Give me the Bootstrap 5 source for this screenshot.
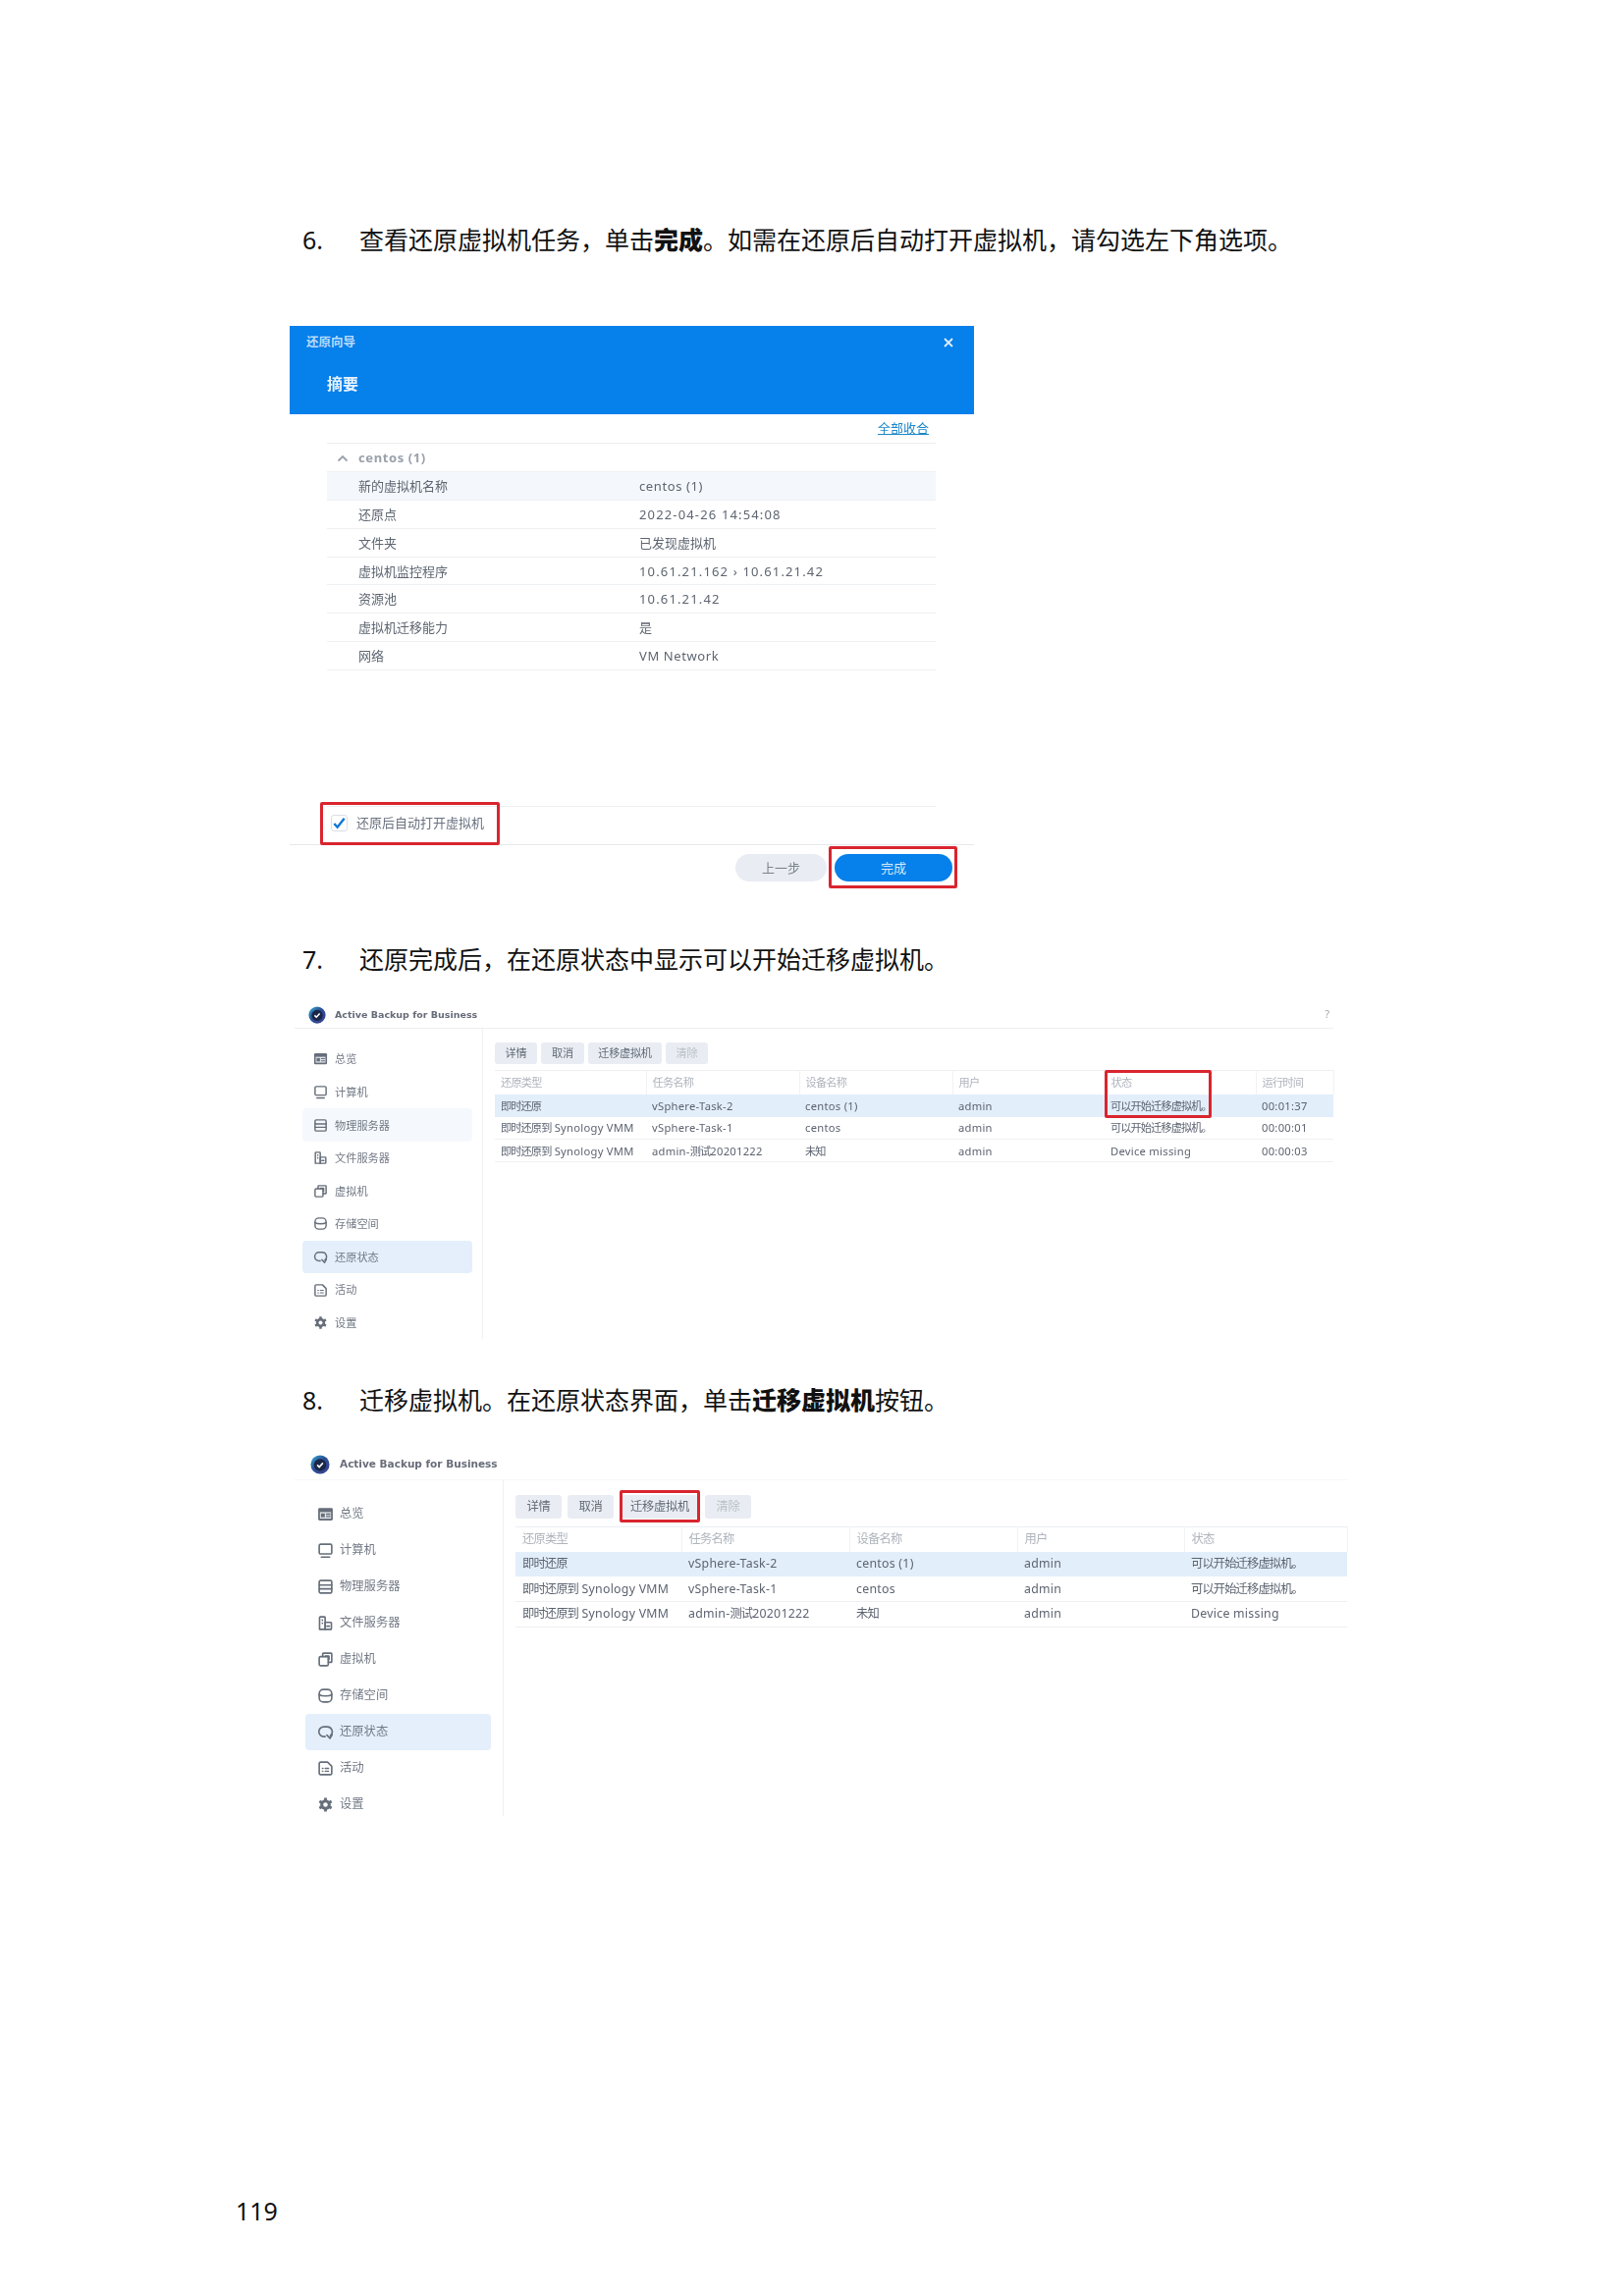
<!DOCTYPE html>
<html lang="zh-CN">
<head>
<meta charset="utf-8">
<title>119</title>
<link href="https://cdn.jsdelivr.net/npm/bootstrap@5.3.0/dist/css/bootstrap.min.css" rel="stylesheet">
<style>
html,body{background:#fff}
body{font-family:"Noto Sans","Noto Sans CJK SC",sans-serif;color:#111}
.doc-page{height:2339px;width:1654px;overflow:hidden}
.step{margin-left:308px;font-size:25px;line-height:34px;color:#111;font-family:"Noto Sans","Noto Sans CJK SC",sans-serif}
.step-no{width:58px;flex:none}
.step b{font-weight:900}
.step-6{margin-top:227px}
.step-7{margin-top:55px}
.step-8{margin-top:45px}
.page-no{margin-left:240px;margin-top:auto;padding-bottom:70px;font-size:25px;line-height:34px;color:#111}
.shot{filter:blur(.4px)}
.redbox{position:absolute;border:3.5px solid #d9252f;border-radius:2px;pointer-events:none}

/* wizard */
.wiz{margin-top:71px;margin-left:295px;width:697px}
.wiz-head{height:90px;background:#0680ea;padding:8px 21px 0 17px}
.wiz-title{font-size:12.5px;line-height:18px;font-weight:700;color:#b9dbfa}
.wiz-close{width:10px;height:10px;stroke:#dcedfd;stroke-width:1.8}
.wiz-sub{margin:23px 0 0 21px;font-size:16px;line-height:20px;font-weight:700;color:#e8f3fe}
.wiz-body{padding:0 39px 0 38px}
.wiz-link{height:29px;line-height:29px;padding-right:7px;font-size:13px;color:#1c87c9;text-decoration:underline}
.sum-tbl.table{--bs-table-bg:transparent;table-layout:fixed;margin:0;font-size:13px;color:#5d6570;border-top:1px solid #eceef1}
.sum-tbl.table>:not(caption)>*>*{padding:0 0 0 32px;height:28.9px;line-height:18px;border-bottom:1px solid #eef0f3;vertical-align:middle;color:#5d6570;box-shadow:none}
.sum-tbl.table>tbody>tr>td.val{padding-left:0;letter-spacing:.6px}
.sum-tbl.table>tbody>tr>td.val.num{letter-spacing:1.15px}
.sum-tbl.table>tbody>tr>td.val.cjk{letter-spacing:0}
.sum-tbl.table>tbody>tr>th{font-weight:700;color:#9aa1ab;position:relative;letter-spacing:.6px}
.sum-tbl.table>tbody>tr.sel>td{--bs-table-bg:#f4f8fc}
.c-label{width:318px}
.chev{position:absolute;left:10px;top:11px;width:12px;height:8px;fill:none;stroke:#9aa1ab;stroke-width:1.8}
.wiz-gap{height:138px}
.wiz-check{position:relative;height:39px;border-top:1px solid #eceef1;padding:0 0 5px 4px;font-size:13px;color:#6a7280;gap:9px}
.chk-box{width:17px;height:17px;border:1px solid #d9dfe6;border-radius:3px;flex:none}
.chk-box svg{width:15px;height:15px;fill:none;stroke:#0f77d6;stroke-width:2.6;display:block}
.rb-check{left:-7px;top:-5px;width:183px;height:44px}
.wiz-foot{height:45px;border-top:1px solid #e6e8eb;padding:9px 22px 0 0;gap:8px}
.pill-btn.btn{height:28px;padding:0;border:0;border-radius:14px;font-size:13px;line-height:28px}
.pill-sec.btn{width:93px;background:#e9edf3;color:#7b838e}
.pill-pri.btn{width:120px;background:#0680ea;color:#d5e9fc}
.rb-finish{left:-6px;top:-8px;width:131px;height:43px}

/* app */
.abb{margin-left:300px;color:#5c6370}
.abb-head{border-bottom:1px solid #eceef1}
.abb-title{font-family:"DejaVu Sans",sans-serif;font-weight:700;color:#666c78}
.abb-help{color:#a2a8b0}
.abb-side{flex:none;border-right:1px solid #eef0f3}
.abb-item{border-radius:4px;color:#727985;line-height:1}
.abb-item svg{flex:none;fill:none;stroke:#666e7a;stroke-width:2.3;stroke-linejoin:round;stroke-linecap:round}
.abb-item.on{background:#e4effb}
.abb-item.soft{background:#f5f9fd}
.tool.btn{padding:0;border:0;border-radius:3px;background:#e9edf3;color:#626a76;font-size:inherit;letter-spacing:-.3px}
.tool.btn.off{color:#bac0c8;opacity:1}
.task-tbl.table{--bs-table-bg:transparent;table-layout:fixed;margin:0;color:#5c6370;border-top:1px solid #eceef1}
.task-tbl.table>:not(caption)>*>*{border-bottom:1px solid #eef0f3;vertical-align:middle;color:#5c6370;box-shadow:none;line-height:1}
.task-tbl.table>thead>tr>th{font-weight:400;color:#aeb4bc;border-bottom:0;border-right:1px solid #f0f2f4;letter-spacing:-.8px}
.task-tbl.table>tbody>tr.sel>td{--bs-table-bg:#e3eefb;border-bottom:0}
.latin{letter-spacing:.28px}
.zh{letter-spacing:-.9px}

.abb-a{font-size:11.2px;width:1058px}
.abb-a .abb-head{height:30px;padding:2px 4px 0 14px;gap:9px}
.abb-a .abb-title{font-size:9.5px}
.abb-a .abb-side{width:192px;height:316px;padding:14px 10px 0 8px}
.abb-a .abb-item{height:33.6px;padding-left:11px;gap:7px}
.abb-a .abb-item svg{width:15px;height:15px}
.abb-a .abb-main{padding:14px 0 0 12px;width:866px}
.abb-a .tools{gap:4px;margin-bottom:6px}
.abb-a .tool{height:22px}
.w43{width:43px}.w44{width:44px}.w75{width:75px}
.abb-a .task-tbl.table>:not(caption)>*>*{padding:0 0 0 6px;height:23px}
.abb-a .task-tbl.table>thead>tr>th{height:24px}
.a1{width:154px}.a2{width:156px}.a3{width:156px}.a4{width:155px}.a5{width:154px}.a6{width:79px}
.tbl-wrap{position:relative}
.rb-status{left:621px;top:0;width:109px;height:49px}

.abb-b{font-size:12.3px;margin-top:27px;width:1072px}
.abb-b .abb-head{height:38px;padding:6px 0 0 16px;gap:10px;border-bottom-color:#f5f6f8}
.abb-b .abb-title{font-size:10.5px}
.abb-b .abb-side{width:213px;height:342px;padding:15.5px 12px 0 11px}
.abb-b .abb-item{height:37px;padding-left:11.500px;gap:6.500px}
.abb-b .abb-item svg{width:17px;height:17px}
.abb-b .abb-main{padding:15px 0 0 12px;width:859px}
.abb-b .tools{gap:6px;margin-bottom:8px}
.abb-b .tool{height:24px}
.w47{width:47px}.w76{width:76px}
.mx-mark{margin:0 2px 0 3px;position:relative}
.rb-move{left:-3px;top:-5px;width:82px;height:33px}
.abb-b .task-tbl.table>:not(caption)>*>*{padding:0 0 0 7px;height:25.6px}
.abb-b .task-tbl.table>thead>tr>th{height:25px}
.b1{width:169px}.b2{width:171px}.b3{width:171px}.b4{width:170px}.b5{width:166px}
</style>
</head>
<body>
<svg class="d-none" xmlns="http://www.w3.org/2000/svg">
<symbol id="i-home" viewBox="0 0 24 24"><rect x="1.500" y="3" width="21" height="18" rx="2" fill="#666e7a" stroke="none"/><rect x="4" y="9" width="16" height="9.500" fill="#dfe2e6" stroke="none"/><rect x="5.500" y="11" width="5.500" height="5.500" fill="#666e7a" stroke="none"/><path d="M13.500 12h5M13.500 15.500h5" stroke-width="1.800"/></symbol>
<symbol id="i-pc" viewBox="0 0 24 24"><rect x="3" y="3" width="18" height="14" rx="2"/><path d="M6 21.500h12"/></symbol>
<symbol id="i-srv" viewBox="0 0 24 24"><rect x="3" y="3" width="18" height="18" rx="2"/><path d="M3 9.500h18M3 15h18"/></symbol>
<symbol id="i-file" viewBox="0 0 24 24"><path d="M3.500 21V4a1 1 0 0 1 1-1h6a1 1 0 0 1 1 1v17z"/><path d="M11.500 11h8a1 1 0 0 1 1 1v8a1 1 0 0 1-1 1h-8z"/><path d="M7.500 7.500v.5M7.500 12v.5M14 16.500h3.500"/></symbol>
<symbol id="i-vm" viewBox="0 0 24 24"><rect x="3" y="8" width="13" height="13" rx="2"/><path d="M8 8V4a1 1 0 0 1 1-1h11a1 1 0 0 1 1 1v11a1 1 0 0 1-1 1h-4"/><path d="M12 8V7h5v5h-1"/></symbol>
<symbol id="i-db" viewBox="0 0 24 24"><rect x="3" y="3" width="18" height="18" rx="6"/><path d="M3 10.500c4 2.500 14 2.500 18 0"/></symbol>
<symbol id="i-loop" viewBox="0 0 24 24"><path d="M11.500 18.500H9.500a7 7 0 0 1 0-14h5a7 7 0 0 1 4.500 12.500"/><path d="M14 16.500l4.500 4.500 3-5"/></symbol>
<symbol id="i-log" viewBox="0 0 24 24"><path d="M5 3h10l6 6v10a2 2 0 0 1-2 2H5a2 2 0 0 1-2-2V5a2 2 0 0 1 2-2z"/><path d="M7.500 12h1M7.500 16h1M11.500 12h5M11.500 16h5" stroke-width="1.800"/></symbol>
<symbol id="i-gear" viewBox="0 0 24 24"><path d="M12 2v20M3.300 7l17.400 10M3.300 17L20.700 7" stroke-width="4" stroke-linecap="butt"/><circle cx="12" cy="12" r="7.500" fill="#666e7a" stroke="none"/><circle cx="12" cy="12" r="3.200" fill="#fff" stroke="none"/></symbol>
</svg>

<main class="doc-page d-flex flex-column">

<p class="step step-6 d-flex mb-0"><span class="step-no">6.</span><span>查看还原虚拟机任务，单击<b>完成</b>。如需在还原后自动打开虚拟机，请勾选左下角选项。</span></p>

<section class="wiz shot">
  <div class="wiz-head">
    <div class="d-flex justify-content-between align-items-center">
      <span class="wiz-title">还原向导</span>
      <svg class="wiz-close" viewBox="0 0 10 10"><path d="M1 1l8 8M9 1l-8 8"/></svg>
    </div>
    <div class="wiz-sub">摘要</div>
  </div>
  <div class="wiz-body">
    <div class="wiz-link text-end">全部收合</div>
    <table class="table sum-tbl">
      <colgroup><col class="c-label"><col></colgroup>
      <tbody>
        <tr><th colspan="2"><svg class="chev" viewBox="0 0 12 8"><path d="M1.500 6.500L6 2l4.500 4.500"/></svg>centos (1)</th></tr>
        <tr class="sel"><td>新的虚拟机名称</td><td class="val">centos (1)</td></tr>
        <tr><td>还原点</td><td class="val num">2022-04-26 14:54:08</td></tr>
        <tr><td>文件夹</td><td class="val cjk">已发现虚拟机</td></tr>
        <tr><td>虚拟机监控程序</td><td class="val num">10.61.21.162 › 10.61.21.42</td></tr>
        <tr><td>资源池</td><td class="val num">10.61.21.42</td></tr>
        <tr><td>虚拟机迁移能力</td><td class="val cjk">是</td></tr>
        <tr><td>网络</td><td class="val">VM Network</td></tr>
      </tbody>
    </table>
    <div class="wiz-gap"></div>
    <div class="wiz-check d-flex align-items-center">
      <span class="chk-box"><svg viewBox="0 0 16 16"><path d="M2.500 8.500l3.500 4L13.500 3"/></svg></span>
      <span>还原后自动打开虚拟机</span>
      <span class="redbox rb-check"></span>
    </div>
  </div>
  <div class="wiz-foot d-flex justify-content-end">
    <button type="button" class="btn pill-btn pill-sec">上一步</button>
    <span class="position-relative d-block">
      <button type="button" class="btn pill-btn pill-pri d-block">完成</button>
      <span class="redbox rb-finish"></span>
    </span>
  </div>
</section>

<p class="step step-7 d-flex mb-0"><span class="step-no">7.</span><span>还原完成后，在还原状态中显示可以开始迁移虚拟机。</span></p>

<section class="abb abb-a shot mt-4">
  <header class="abb-head d-flex align-items-center">
    <svg width="18" height="18" viewBox="0 0 24 24"><defs><linearGradient id="lg1" x1="0" y1="0" x2="1" y2="1"><stop offset="0" stop-color="#35b2d4"/><stop offset=".45" stop-color="#2a4f96"/><stop offset="1" stop-color="#3a3f8f"/></linearGradient></defs><circle cx="12" cy="12" r="11.500" fill="url(#lg1)"/><circle cx="12" cy="12.500" r="7.500" fill="#1b2547"/><path d="M8.500 12.500l2.500 2.500 4.500-5" fill="none" stroke="#fff" stroke-width="2"/></svg>
    <span class="abb-title">Active Backup for Business</span>
    <span class="abb-help ms-auto">?</span>
  </header>
  <div class="d-flex">
    <nav class="abb-side">
      <div class="abb-item d-flex align-items-center"><svg><use href="#i-home"/></svg>总览</div>
      <div class="abb-item d-flex align-items-center"><svg><use href="#i-pc"/></svg>计算机</div>
      <div class="abb-item soft d-flex align-items-center"><svg><use href="#i-srv"/></svg>物理服务器</div>
      <div class="abb-item d-flex align-items-center"><svg><use href="#i-file"/></svg>文件服务器</div>
      <div class="abb-item d-flex align-items-center"><svg><use href="#i-vm"/></svg>虚拟机</div>
      <div class="abb-item d-flex align-items-center"><svg><use href="#i-db"/></svg>存储空间</div>
      <div class="abb-item on d-flex align-items-center"><svg><use href="#i-loop"/></svg>还原状态</div>
      <div class="abb-item d-flex align-items-center"><svg><use href="#i-log"/></svg>活动</div>
      <div class="abb-item d-flex align-items-center"><svg><use href="#i-gear"/></svg>设置</div>
    </nav>
    <div class="abb-main">
      <div class="tools d-flex">
        <button type="button" class="btn tool w43">详情</button>
        <button type="button" class="btn tool w44">取消</button>
        <button type="button" class="btn tool w75">迁移虚拟机</button>
        <button type="button" class="btn tool off w43">清除</button>
      </div>
      <div class="tbl-wrap">
        <table class="table task-tbl">
          <colgroup><col class="a1"><col class="a2"><col class="a3"><col class="a4"><col class="a5"><col class="a6"></colgroup>
          <thead><tr><th>还原类型</th><th>任务名称</th><th>设备名称</th><th>用户</th><th>状态</th><th>运行时间</th></tr></thead>
          <tbody class="latin">
            <tr class="sel"><td><span class="zh">即时还原</span></td><td>vSphere-Task-2</td><td>centos (1)</td><td>admin</td><td><span class="zh">可以开始迁移虚拟机。</span></td><td>00:01:37</td></tr>
            <tr><td><span class="zh">即时还原到</span> Synology VMM</td><td>vSphere-Task-1</td><td>centos</td><td>admin</td><td><span class="zh">可以开始迁移虚拟机。</span></td><td>00:00:01</td></tr>
            <tr><td><span class="zh">即时还原到</span> Synology VMM</td><td>admin-<span class="zh">测试</span>20201222</td><td><span class="zh">未知</span></td><td>admin</td><td>Device missing</td><td>00:00:03</td></tr>
          </tbody>
        </table>
        <span class="redbox rb-status"></span>
      </div>
    </div>
  </div>
</section>

<p class="step step-8 d-flex mb-0"><span class="step-no">8.</span><span>迁移虚拟机。在还原状态界面，单击<b>迁移虚拟机</b>按钮。</span></p>

<section class="abb abb-b shot">
  <header class="abb-head d-flex align-items-center">
    <svg width="20" height="20" viewBox="0 0 24 24"><defs><linearGradient id="lg2" x1="0" y1="0" x2="1" y2="1"><stop offset="0" stop-color="#35b2d4"/><stop offset=".45" stop-color="#2a4f96"/><stop offset="1" stop-color="#3a3f8f"/></linearGradient></defs><circle cx="12" cy="12" r="11.500" fill="url(#lg2)"/><circle cx="12" cy="12.500" r="7.500" fill="#1b2547"/><path d="M8.500 12.500l2.500 2.500 4.500-5" fill="none" stroke="#fff" stroke-width="2"/></svg>
    <span class="abb-title">Active Backup for Business</span>
  </header>
  <div class="d-flex">
    <nav class="abb-side">
      <div class="abb-item d-flex align-items-center"><svg><use href="#i-home"/></svg>总览</div>
      <div class="abb-item d-flex align-items-center"><svg><use href="#i-pc"/></svg>计算机</div>
      <div class="abb-item d-flex align-items-center"><svg><use href="#i-srv"/></svg>物理服务器</div>
      <div class="abb-item d-flex align-items-center"><svg><use href="#i-file"/></svg>文件服务器</div>
      <div class="abb-item d-flex align-items-center"><svg><use href="#i-vm"/></svg>虚拟机</div>
      <div class="abb-item d-flex align-items-center"><svg><use href="#i-db"/></svg>存储空间</div>
      <div class="abb-item on d-flex align-items-center"><svg><use href="#i-loop"/></svg>还原状态</div>
      <div class="abb-item d-flex align-items-center"><svg><use href="#i-log"/></svg>活动</div>
      <div class="abb-item d-flex align-items-center"><svg><use href="#i-gear"/></svg>设置</div>
    </nav>
    <div class="abb-main">
      <div class="tools d-flex">
        <button type="button" class="btn tool w47">详情</button>
        <button type="button" class="btn tool w47">取消</button>
        <span class="mx-mark d-block">
          <button type="button" class="btn tool w76 d-block">迁移虚拟机</button>
          <span class="redbox rb-move"></span>
        </span>
        <button type="button" class="btn tool off w47">清除</button>
      </div>
      <table class="table task-tbl">
        <colgroup><col class="b1"><col class="b2"><col class="b3"><col class="b4"><col class="b5"></colgroup>
        <thead><tr><th>还原类型</th><th>任务名称</th><th>设备名称</th><th>用户</th><th>状态</th></tr></thead>
        <tbody class="latin">
          <tr class="sel"><td><span class="zh">即时还原</span></td><td>vSphere-Task-2</td><td>centos (1)</td><td>admin</td><td><span class="zh">可以开始迁移虚拟机。</span></td></tr>
          <tr><td><span class="zh">即时还原到</span> Synology VMM</td><td>vSphere-Task-1</td><td>centos</td><td>admin</td><td><span class="zh">可以开始迁移虚拟机。</span></td></tr>
          <tr><td><span class="zh">即时还原到</span> Synology VMM</td><td>admin-<span class="zh">测试</span>20201222</td><td><span class="zh">未知</span></td><td>admin</td><td>Device missing</td></tr>
        </tbody>
      </table>
    </div>
  </div>
</section>

<div class="page-no">119</div>
</main>
<script src="https://cdn.jsdelivr.net/npm/bootstrap@5.3.0/dist/js/bootstrap.bundle.min.js"></script>
</body>
</html>
